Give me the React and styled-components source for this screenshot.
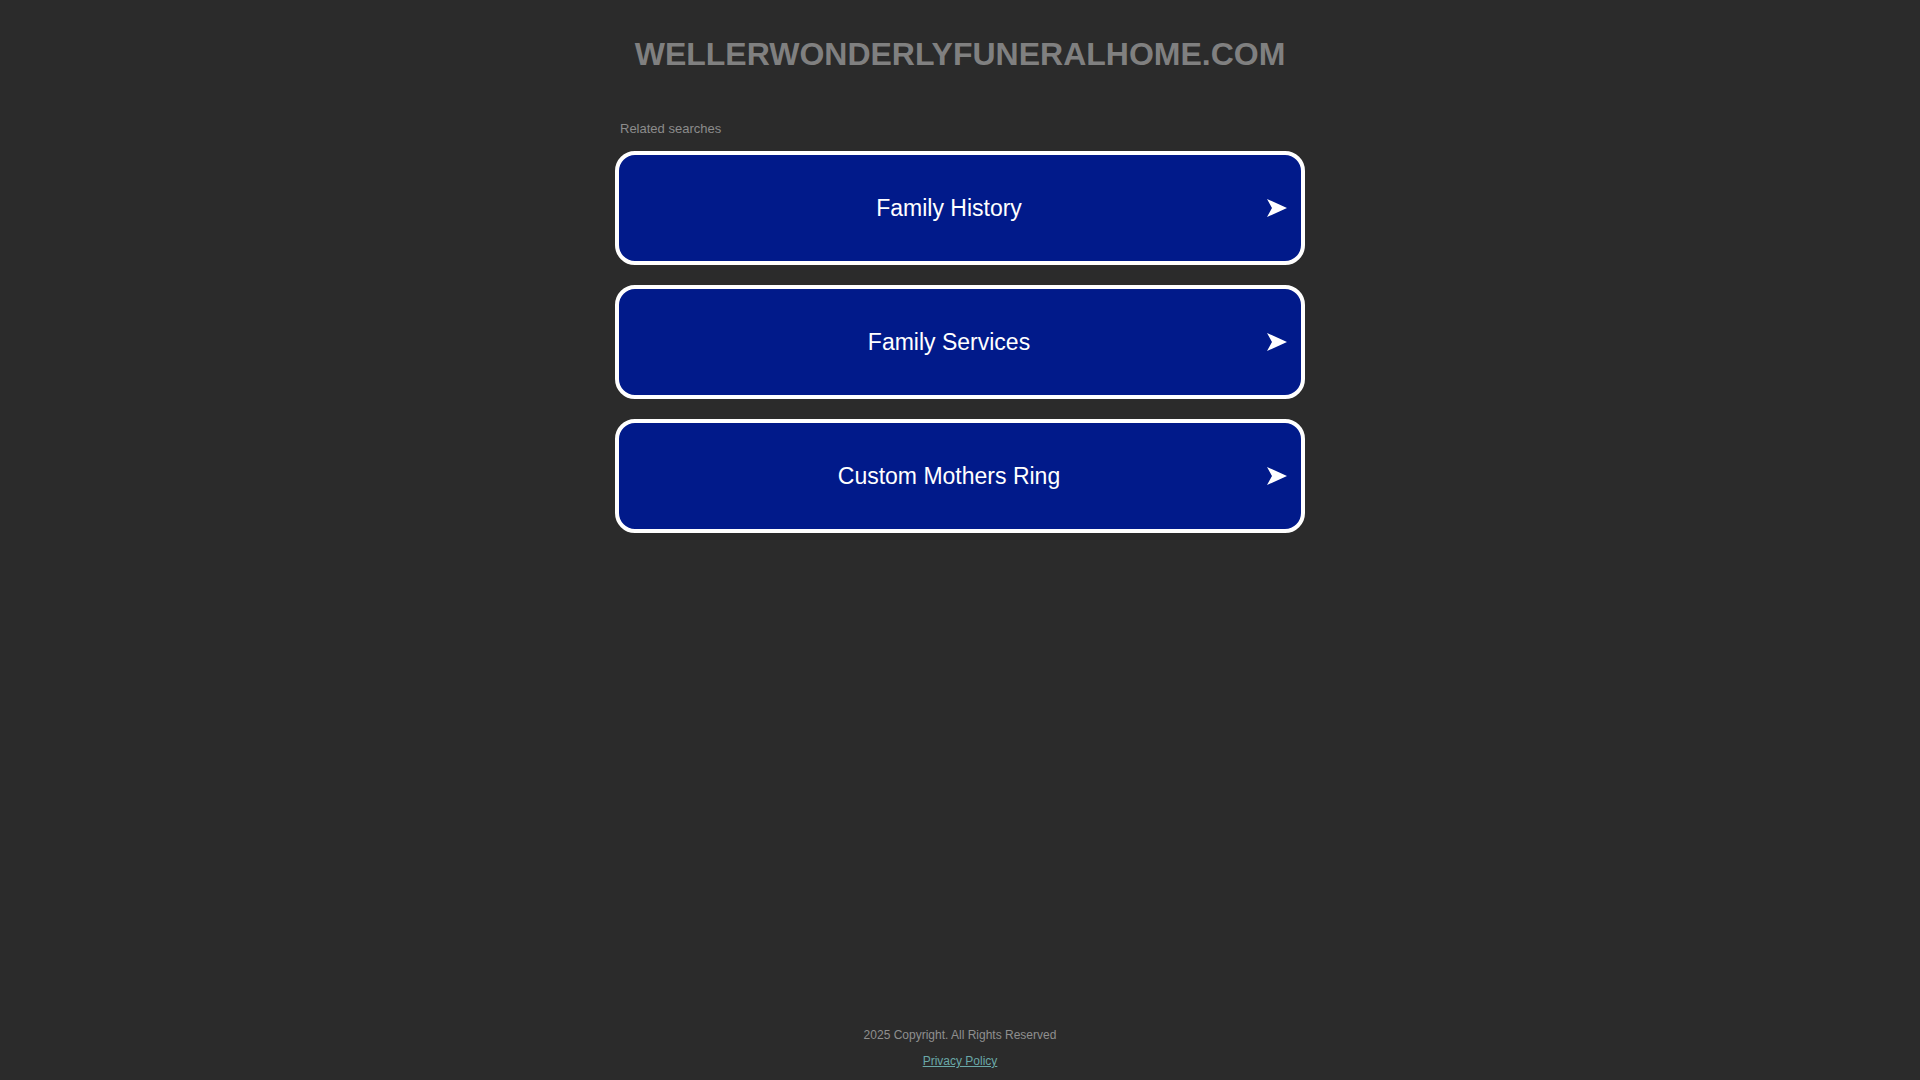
import React from "react";
import styled, { createGlobalStyle } from "styled-components";

const GlobalStyle = createGlobalStyle`
  html, body {
    margin: 0;
    padding: 0;
    background: #2b2b2b;
    font-family: "Liberation Sans", Arial, sans-serif;
  }
`;

const Page = styled.div`
  min-height: 100vh;
  display: flex;
  flex-direction: column;
  align-items: center;
  box-sizing: border-box;
`;

const Title = styled.h1`
  margin: 0;
  padding-top: 36px;
  font-size: 32px;
  font-weight: 700;
  line-height: normal;
  color: #808080;
  text-align: center;
`;

const Results = styled.div`
  width: 690px;
  margin-top: 48px;
  display: flex;
  flex-direction: column;
`;

const Label = styled.div`
  font-size: 13px;
  line-height: normal;
  color: #8c8c8c;
  padding-left: 5px;
  margin-bottom: 15px;
`;

const List = styled.div`
  display: flex;
  flex-direction: column;
  gap: 20px;
`;

const Item = styled.a`
  box-sizing: border-box;
  height: 114px;
  display: flex;
  align-items: center;
  padding: 0 14px 0 20px;
  border: 4px solid #ffffff;
  border-radius: 20px;
  background: #011a8a;
  color: #ffffff;
  text-decoration: none;
  cursor: pointer;
`;

const ItemText = styled.span`
  flex: 1;
  padding-top: 1px;
  text-align: center;
  font-size: 23px;
  line-height: normal;
`;

const Arrow = styled.svg`
  width: 20px;
  height: 18px;
  margin-left: 8px;
  flex: none;
`;

const Footer = styled.footer`
  margin-top: auto;
  padding-bottom: 12px;
  display: flex;
  flex-direction: column;
  align-items: center;
  gap: 12px;
  font-size: 12px;
  line-height: normal;
`;

const Copy = styled.div`
  color: #8f8f8f;
`;

const PolicyLink = styled.a`
  color: #6aa8a8;
  text-decoration: underline;
`;

const items = ["Family History", "Family Services", "Custom Mothers Ring"];

export default function App() {
  return (
    <>
      <GlobalStyle />
      <Page>
        <Title>WELLERWONDERLYFUNERALHOME.COM</Title>
        <Results>
          <Label>Related searches</Label>
          <List>
            {items.map((t) => (
              <Item key={t}>
                <ItemText>{t}</ItemText>
                <Arrow viewBox="0 0 20 18">
                  <path d="M0 0 L20 9 L0 18 L5 9 Z" fill="#ffffff" />
                </Arrow>
              </Item>
            ))}
          </List>
        </Results>
        <Footer>
          <Copy>2025 Copyright. All Rights Reserved</Copy>
          <PolicyLink href="#">Privacy Policy</PolicyLink>
        </Footer>
      </Page>
    </>
  );
}
